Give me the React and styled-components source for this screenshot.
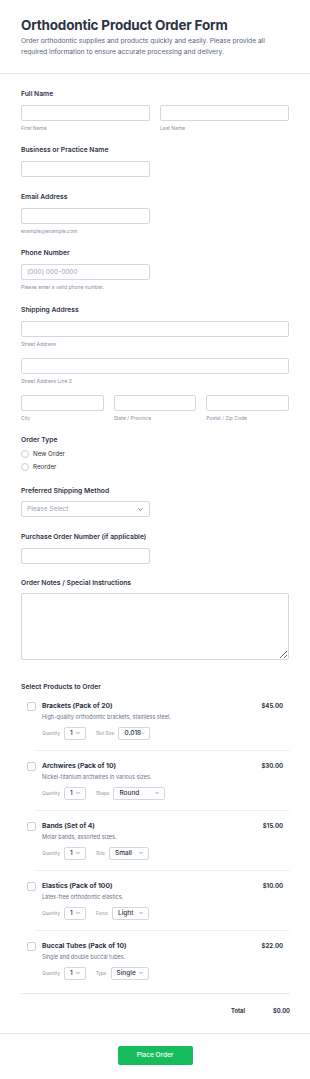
import React from 'react'
import styled, { createGlobalStyle } from 'styled-components'
import { ChevronDown } from 'lucide-react'

const GlobalStyle = createGlobalStyle`
	* { box-sizing: border-box; }
	body {
		margin: 0;
		background: #fff;
		font-family: Inter, "Noto Sans", sans-serif;
		color: #2c3345;
	}
`

const Header = styled.header`
	padding: 17px 21px 16px;
	border-bottom: 1px solid #e6e9ef;
`

const Title = styled.h1`
	margin: 0;
	font-size: 13.5px;
	line-height: 17px;
	font-weight: 700;
	letter-spacing: -0.2px;
	color: #2c3345;
`

const Intro = styled.p`
	margin: 2px 0 0;
	max-width: 256px;
	font-size: 6.65px;
	line-height: 10.5px;
	color: #57647e;
`

const Body = styled.form`
	padding: 16px 21px 18px;
	display: flex;
	flex-direction: column;
	gap: 15.4px;
`

const Field = styled.div`
	display: flex;
	flex-direction: column;
	margin-top: ${(p) => p.$top || 0}px;
`

const Label = styled.label`
	font-size: 6.75px;
	line-height: 8px;
	font-weight: 600;
	color: #2c3345;
	margin-bottom: ${(p) => (p.$mb === undefined ? 7 : p.$mb)}px;
`

const Input = styled.input`
	display: block;
	width: ${(p) => (p.$half ? 'calc(50% - 5px)' : '100%')};
	height: 16px;
	margin: 0;
	padding: 0 5px;
	border: 1px solid #d3d8e2;
	border-radius: 2px;
	background: #fff;
	font-family: inherit;
	font-size: 6.5px;
	color: #2c3345;
	&::placeholder {
		color: #9ba3b5;
	}
`

const TextArea = styled.textarea`
	display: block;
	width: 100%;
	height: 67px;
	margin: 0;
	border: 1px solid #d3d8e2;
	border-radius: 2px;
	font-family: inherit;
`

const Sub = styled.span`
	display: block;
	margin-top: 4px;
	font-size: 5px;
	line-height: 6px;
	color: #8a93a6;
`

const Cols = styled.div`
	display: grid;
	grid-template-columns: repeat(${(p) => p.$n}, 1fr);
	column-gap: 10px;
`

const Lines = styled.div`
	display: flex;
	flex-direction: column;
	gap: 11px;
`

const RadioList = styled.div`
	display: flex;
	flex-direction: column;
	gap: 4px;
`

const RadioRow = styled.label`
	display: flex;
	align-items: center;
	gap: 4px;
	height: 9px;
	font-size: 6.25px;
	color: #2c3345;
`

const RadioDot = styled.span`
	width: 8px;
	height: 8px;
	border: 1px solid #c9cfdb;
	border-radius: 50%;
	background: #fff;
`

const SelectBox = styled.div`
	width: calc(50% - 5px);
	height: 16px;
	padding: 0 5px;
	border: 1px solid #d3d8e2;
	border-radius: 2px;
	display: flex;
	align-items: center;
	justify-content: space-between;
	font-size: 6.5px;
	color: #9ba3b5;
	svg {
		color: #4b5563;
	}
`

const ProductList = styled.div`
	margin-right: -1px;
	border-bottom: 1px solid #e6e9ef;
`

const Product = styled.div`
	padding: 11.5px 7px 0 6px;
	&:last-child {
		padding-bottom: 13px;
	}
	&:not(:last-child)::after {
		content: '';
		display: block;
		margin: 10px -7px 0 8px;
		border-top: 1px dotted #dde1e8;
	}
`

const ProductRow = styled.div`
	display: grid;
	grid-template-columns: 9px 1fr auto;
	column-gap: 6px;
	align-items: start;
`

const Check = styled.span`
	width: 9px;
	height: 9px;
	border: 1px solid #c9cfdb;
	border-radius: 2px;
	background: #fff;
`

const ProductName = styled.div`
	font-size: 6.75px;
	line-height: 8px;
	font-weight: 700;
	color: #2c3345;
`

const ProductDesc = styled.div`
	margin-top: 2.5px;
	font-size: 5.5px;
	line-height: 8px;
	color: #6a7389;
`

const Price = styled.div`
	font-size: 6px;
	line-height: 8px;
	font-weight: 700;
	color: #2c3345;
`

const Controls = styled.div`
	margin-top: 6px;
	display: flex;
	align-items: center;
`

const OptLabel = styled.span`
	font-size: 4.5px;
	color: #8a93a6;
	margin-right: 4px;
`

const MiniSelect = styled.div`
	width: ${(p) => p.$w}px;
	height: 13px;
	padding: 0 4px 0 5px;
	margin-right: 10px;
	border: 1px solid #d3d8e2;
	border-radius: 2px;
	display: flex;
	align-items: center;
	justify-content: space-between;
	font-size: 6.5px;
	font-weight: 500;
	color: #2c3345;
	svg {
		color: #6b7280;
	}
`

const TotalRow = styled.div`
	display: flex;
	justify-content: flex-end;
	gap: 28px;
	margin: -2px -1px 0 0;
	font-size: 5.75px;
	line-height: 8px;
	font-weight: 700;
	color: #2c3345;
`

const Footer = styled.footer`
	border-top: 1px solid #e6e9ef;
	padding: 12px 0 17px;
	display: flex;
	justify-content: center;
`

const Submit = styled.button`
	width: 75px;
	height: 19px;
	border: none;
	border-radius: 2px;
	background: #18bd5b;
	color: #fff;
	font-family: inherit;
	font-size: 6.5px;
	font-weight: 500;
`

const products = [
	{ name: 'Brackets (Pack of 20)', desc: 'High-quality orthodontic brackets, stainless steel.', price: '$45.00', opt: 'Slot Size', val: '0.018', w: 32 },
	{ name: 'Archwires (Pack of 10)', desc: 'Nickel-titanium archwires in various sizes.', price: '$30.00', opt: 'Shape', val: 'Round', w: 52 },
	{ name: 'Bands (Set of 4)', desc: 'Molar bands, assorted sizes.', price: '$15.00', opt: 'Size', val: 'Small', w: 40 },
	{ name: 'Elastics (Pack of 100)', desc: 'Latex-free orthodontic elastics.', price: '$10.00', opt: 'Force', val: 'Light', w: 37 },
	{ name: 'Buccal Tubes (Pack of 10)', desc: 'Single and double buccal tubes.', price: '$22.00', opt: 'Type', val: 'Single', w: 38 },
]

const App = () => {
	return (
		<>
			<GlobalStyle />
			<Header>
				<Title>Orthodontic Product Order Form</Title>
				<Intro>
					Order orthodontic supplies and products quickly and easily. Please provide all required
					information to ensure accurate processing and delivery.
				</Intro>
			</Header>
			<Body onSubmit={(e) => e.preventDefault()}>
				<Field>
					<Label>Full Name</Label>
					<Cols $n={2}>
						<div>
							<Input />
							<Sub>First Name</Sub>
						</div>
						<div>
							<Input />
							<Sub>Last Name</Sub>
						</div>
					</Cols>
				</Field>
				<Field>
					<Label>Business or Practice Name</Label>
					<Input $half />
				</Field>
				<Field>
					<Label>Email Address</Label>
					<Input $half />
					<Sub>example@example.com</Sub>
				</Field>
				<Field>
					<Label>Phone Number</Label>
					<Input $half placeholder='(000) 000-0000' />
					<Sub>Please enter a valid phone number.</Sub>
				</Field>
				<Field>
					<Label>Shipping Address</Label>
					<Lines>
						<div>
							<Input />
							<Sub>Street Address</Sub>
						</div>
						<div>
							<Input />
							<Sub>Street Address Line 2</Sub>
						</div>
						<Cols $n={3}>
							<div>
								<Input />
								<Sub>City</Sub>
							</div>
							<div>
								<Input />
								<Sub>State / Province</Sub>
							</div>
							<div>
								<Input />
								<Sub>Postal / Zip Code</Sub>
							</div>
						</Cols>
					</Lines>
				</Field>
				<Field>
					<Label $mb={6}>Order Type</Label>
					<RadioList>
						<RadioRow>
							<RadioDot />
							New Order
						</RadioRow>
						<RadioRow>
							<RadioDot />
							Reorder
						</RadioRow>
					</RadioList>
				</Field>
				<Field>
					<Label $mb={6}>Preferred Shipping Method</Label>
					<SelectBox>
						Please Select
						<ChevronDown size={7} strokeWidth={2.5} />
					</SelectBox>
				</Field>
				<Field>
					<Label>Purchase Order Number (if applicable)</Label>
					<Input $half />
				</Field>
				<Field>
					<Label $mb={6}>Order Notes / Special Instructions</Label>
					<TextArea />
				</Field>
				<Field $top={7}>
					<Label $mb={0}>Select Products to Order</Label>
					<ProductList>
						{products.map((p) => (
							<Product key={p.name}>
								<ProductRow>
									<Check />
									<div>
										<ProductName>{p.name}</ProductName>
										<ProductDesc>{p.desc}</ProductDesc>
										<Controls>
											<OptLabel>Quantity</OptLabel>
											<MiniSelect $w={22}>
												1
												<ChevronDown size={6} strokeWidth={2.5} />
											</MiniSelect>
											<OptLabel>{p.opt}</OptLabel>
											<MiniSelect $w={p.w}>
												{p.val}
												<ChevronDown size={6} strokeWidth={2.5} />
											</MiniSelect>
										</Controls>
									</div>
									<Price>{p.price}</Price>
								</ProductRow>
							</Product>
						))}
					</ProductList>
				</Field>
				<TotalRow>
					<span>Total</span>
					<span>$0.00</span>
				</TotalRow>
			</Body>
			<Footer>
				<Submit type='button'>Place Order</Submit>
			</Footer>
		</>
	)
}

export default App
